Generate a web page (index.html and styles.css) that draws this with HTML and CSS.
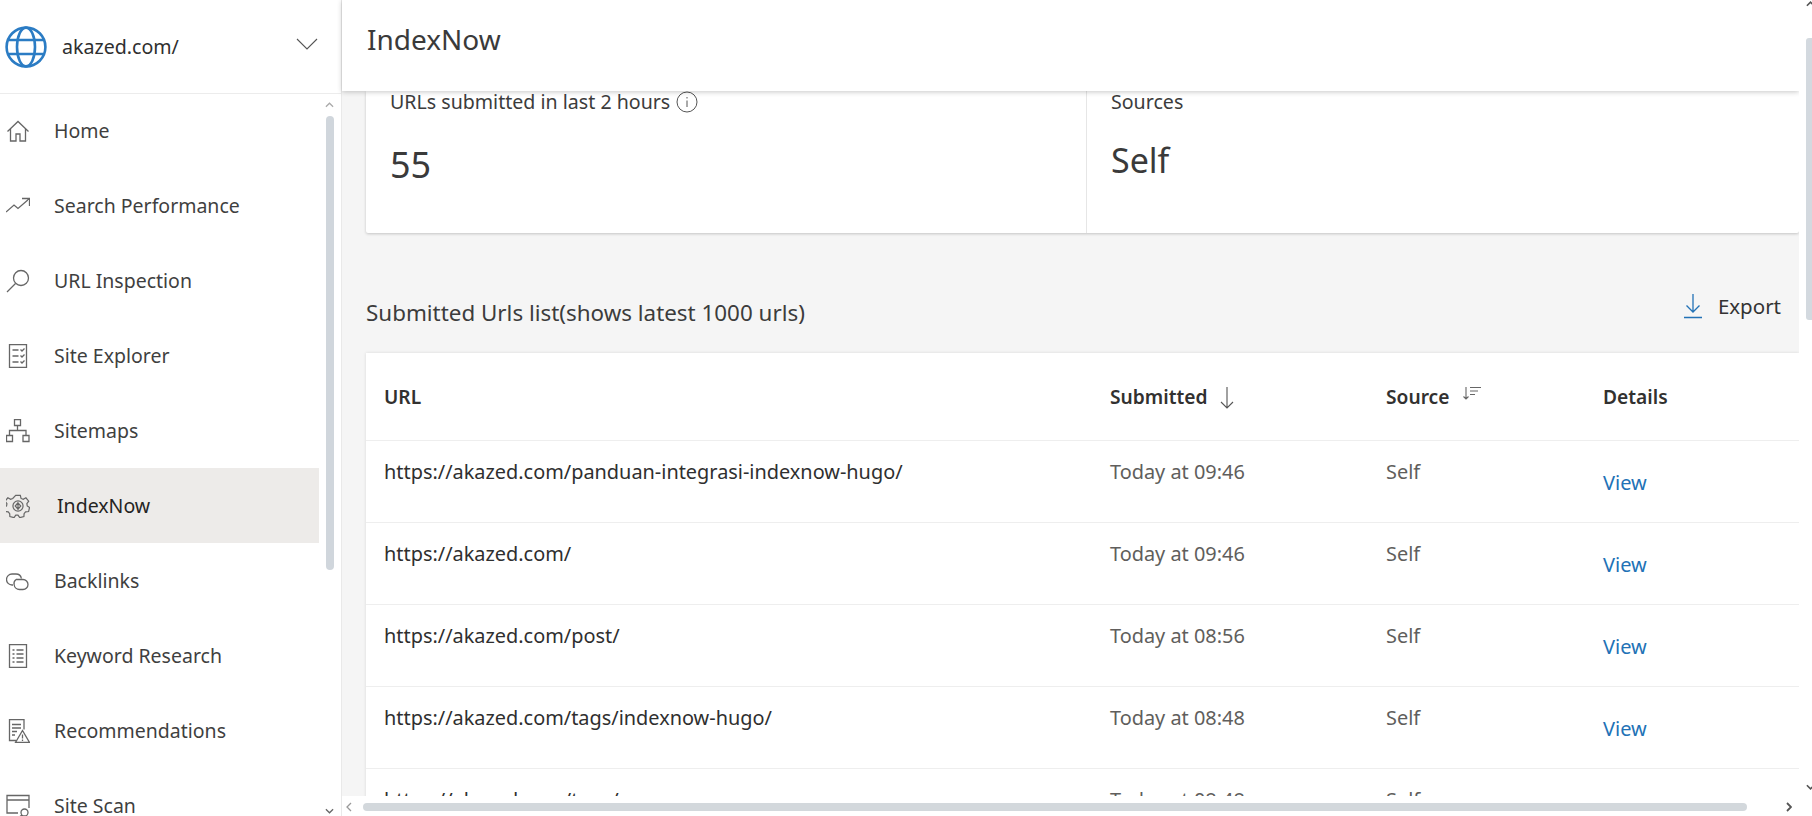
FILE: index.html
```html
<!DOCTYPE html>
<html lang="en">
<head>
<meta charset="utf-8">
<title>IndexNow</title>
<link rel="stylesheet" href="styles.css">
</head>
<body>
<div class="app">
  <aside class="sidebar">
    <div class="site">
      <svg class="globe" viewBox="0 0 42 42" fill="none" stroke="#2b7cc4" stroke-width="2.6"><circle cx="21" cy="21" r="19.4"/><ellipse cx="21" cy="21" rx="9" ry="19.4"/><path d="M4 14h34M4 28h34"/></svg>
      <span class="site-name">akazed.com/</span>
      <svg class="chev" viewBox="0 0 22 12" fill="none" stroke="#555" stroke-width="1.1"><path d="M1 1l10 10L21 1"/></svg>
    </div>
    <nav class="nav">
      <div class="nav-list">
      <a class="nav-item"><span class="ico"><svg viewBox="0 0 24 24"><path d="M1.500 12.500 12 2.500l10.500 10M4.500 10v12h5.500v-7h4v7h5.500V10"/></svg></span>Home</a>
      <a class="nav-item"><span class="ico"><svg viewBox="0 0 24 24"><path d="M0 18l8-7 4 3.500L23 5M16 4.500h7.500V12"/></svg></span>Search Performance</a>
      <a class="nav-item"><span class="ico"><svg viewBox="0 0 24 24"><circle cx="15" cy="9" r="7.500"/><path d="M9.500 14.500 1 23"/></svg></span>URL Inspection</a>
      <a class="nav-item"><span class="ico"><svg viewBox="0 0 24 24"><path d="M3.500 .5h17v23h-17zM6.500 6h6M6.500 12h6M6.500 18h6M14.500 5.500l1.500 1.500 2.500-2.500M14.500 11.500l1.500 1.500 2.500-2.500M14.500 17.500l1.500 1.500 2.500-2.500"/></svg></span>Site Explorer</a>
      <a class="nav-item"><span class="ico"><svg viewBox="0 0 24 24"><path d="M8.500 .5h6v6h-6zM.5 16.500h6v6h-6zM17 16.500h6v6h-6zM11.500 6.500v5M3.500 16.500v-5h16.500v5"/></svg></span>Sitemaps</a>
      <a class="nav-item active"><span class="ico"><svg viewBox="0 0 26 26"><path d="M10.500 1.500h5l.8 3.300 2.300 1 3-1.700 3 3.700-2 2.700.4 2.500 2.500 1.500-1 4.500-3.300.3-1.600 2-.2 3.200-4.500 1.100-1.900-2.700h-2.400l-1.900 2.700-4.500-1.100-.2-3.200-1.600-2-3.300-.3-1-4.500 2.500-1.500.4-2.500-2-2.700 3-3.700 3 1.700 2.300-1z"/><circle cx="13" cy="13" r="5.500"/><path d="M13 9.500l3 3.500-3 3.500-3-3.500zM13 9.500v7"/></svg></span><span class="active-label">IndexNow</span></a>
      <a class="nav-item"><span class="ico"><svg viewBox="0 0 24 24"><path d="M7 16H6A5.500 5.500 0 0 1 6 5h4a5.500 5.500 0 0 1 5.400 4.500"/><path d="M10 10.500h7a5 5 0 0 1 0 10h-3.500a5.500 5.500 0 0 1-5.400-5 5 5 0 0 1 1.900-5"/></svg></span>Backlinks</a>
      <a class="nav-item"><span class="ico"><svg viewBox="0 0 24 24"><path d="M3.500 .5h17v23h-17zM6.500 6h2M10.500 6h7M6.500 10h2M10.500 10h7M6.500 14h2M10.500 14h7M6.500 18h2M10.500 18h7"/></svg></span>Keyword Research</a>
      <a class="nav-item"><span class="ico"><svg viewBox="0 0 24 24"><path d="M10 21.500H3.500V.5h14.500v10M6 5.500h9M6 9h9M6 12.500h5M6 16h3M16.500 11.500l7 12h-14zM16.500 15.500v4M16.500 20.500v1.500"/></svg></span>Recommendations</a>
      <a class="nav-item"><span class="ico"><svg viewBox="0 0 24 24"><path d="M12 19H1V1.500h22V14M1 6h22"/><circle cx="18.500" cy="18.500" r="3.500"/><path d="M16 21l-4 3"/></svg></span>Site Scan</a>
      </div>
      <div class="nav-bar" aria-hidden="true">
        <svg class="arr" viewBox="0 0 10 6"><path d="M1 5l4-4 4 4"/></svg>
        <span class="nav-thumb"></span>
        <span class="nav-fill"></span>
        <svg class="arr" viewBox="0 0 10 6"><path d="M1 1l4 4 4-4"/></svg>
      </div>
    </nav>
  </aside>
  <main class="main">
    <header class="topbar"><h1>IndexNow</h1></header>
    <div class="content">
      <section class="stats">
        <div class="stat stat-first">
          <div class="stat-label">URLs submitted in last 2 hours
            <svg class="info" viewBox="0 0 22 22" fill="none" stroke="#555" stroke-width="1"><circle cx="11" cy="11" r="10"/><path d="M11 9.500V16M11 6v1.500"/></svg>
          </div>
          <div class="stat-num">55</div>
        </div>
        <div class="stat">
          <div class="stat-label">Sources</div>
          <div class="stat-val">Self</div>
        </div>
      </section>
      <div class="list-head">
        <h2>Submitted Urls list(shows latest 1000 urls)</h2>
        <a class="export">
          <svg viewBox="0 0 18 26" fill="none" stroke="#2272b6" stroke-width="1.3"><path d="M9 1v18M2.500 12.500 9 19l6.500-6.500M0 24.500h18"/></svg>
          Export
        </a>
      </div>
      <section class="table">
        <div class="row head">
          <div class="c-url">URL</div>
          <div class="c-sub">Submitted<svg class="sort-big" viewBox="0 0 14 24" fill="none" stroke="#555" stroke-width="1.1"><path d="M7 1v21M1 16l6 6 6-6"/></svg></div>
          <div class="c-src">Source<svg class="sort-small" viewBox="0 0 18 16" fill="none" stroke="#666" stroke-width="1.100"><path d="M3 1v12M.5 10.500 3 13l2.500-2.500M7 1.500h11M7 5h8M7 8.500h5"/></svg></div>
          <div class="c-det">Details</div>
        </div>
        <div class="row">
          <div class="c-url">https://akazed.com/panduan-integrasi-indexnow-hugo/</div>
          <div class="c-sub muted">Today at 09:46</div><div class="c-src muted">Self</div><div class="c-det"><a class="view">View</a></div>
        </div>
        <div class="row">
          <div class="c-url">https://akazed.com/</div>
          <div class="c-sub muted">Today at 09:46</div><div class="c-src muted">Self</div><div class="c-det"><a class="view">View</a></div>
        </div>
        <div class="row">
          <div class="c-url">https://akazed.com/post/</div>
          <div class="c-sub muted">Today at 08:56</div><div class="c-src muted">Self</div><div class="c-det"><a class="view">View</a></div>
        </div>
        <div class="row">
          <div class="c-url">https://akazed.com/tags/indexnow-hugo/</div>
          <div class="c-sub muted">Today at 08:48</div><div class="c-src muted">Self</div><div class="c-det"><a class="view">View</a></div>
        </div>
        <div class="row">
          <div class="c-url">https://akazed.com/tags/</div>
          <div class="c-sub muted">Today at 08:48</div><div class="c-src muted">Self</div><div class="c-det"><a class="view">View</a></div>
        </div>
      </section>
    </div>
    <div class="hbar" aria-hidden="true">
      <svg class="h-arr" viewBox="0 0 6 10"><path d="M5 1 1 5l4 4"/></svg>
      <span class="h-thumb"></span>
      <svg class="h-arr h-arr-end" viewBox="0 0 6 10"><path d="M1 1l4 4-4 4"/></svg>
    </div>
    <div class="vbar" aria-hidden="true">
      <svg class="v-arr" viewBox="0 0 10 6"><path d="M1 5l4-4 4 4"/></svg>
      <span class="v-thumb"></span>
      <svg class="v-arr v-arr-end" viewBox="0 0 10 6"><path d="M1 1l4 4 4-4"/></svg>
    </div>
  </main>
</div>
</body>
</html>
```
FILE: styles.css
```css
* { box-sizing: border-box; }
html, body { margin: 0; height: 100%; overflow: hidden; }
body { font-family: "Noto Sans", "Open Sans", sans-serif; color: #323130; background: #fff; }
.app { display: flex; height: 816px; }

.sidebar { width: 342px; flex: none; display: flex; flex-direction: column; border-right: 1px solid #e9e9e9; background: #fff; }
.site { height: 94px; flex: none; display: flex; align-items: center; padding: 0 10px 0 5px; border-bottom: 1px solid #ececec; }
.globe { width: 42px; height: 42px; flex: none; }
.site-name { margin-left: 15px; font-size: 19.600px; color: #2f2f2f; flex: 1; }
.chev { width: 22px; height: 12px; margin-right: 13px; margin-bottom: 5px; }

.nav { position: relative; flex: 1; overflow: hidden; }
.nav-list { margin-top: -1px; }
.nav-item { display: flex; align-items: center; height: 75px; width: 319px; font-size: 19.500px; color: #3f3f3f; padding-left: 6px; }
.nav-item .ico { width: 48px; flex: none; display: flex; }
.ico svg { width: 24px; height: 24px; fill: none; stroke: #666; stroke-width: 1.300; }
.nav-item.active { background: #edebe9; }
.active-label { margin-left: 3px; color: #252423; }
.nav-bar { position: absolute; top: 0; right: 7px; width: 9px; height: 100%; display: flex; flex-direction: column; align-items: center; }
.nav-bar .arr { width: 9px; height: 6px; margin: 8px 0 8px; fill: none; stroke: #aaa; stroke-width: 1.400; }
.nav-bar .nav-thumb { width: 8px; height: 454px; background: #d0d6dc; border-radius: 4px; flex: none; }
.nav-bar .nav-fill { flex: 1; }
.nav-bar .arr:last-child { stroke: #666; margin-bottom: 2px; }

.main { position: relative; flex: 1; min-width: 0; background: #f5f5f5; display: flex; flex-direction: column; }
.topbar { height: 91px; flex: none; width: 1457px; background: #fff; display: flex; align-items: center; padding: 0 0 14px 25px; box-shadow: 0 1px 5px rgba(0,0,0,.22); position: relative; z-index: 2; }
.topbar h1 { margin: 0; font-size: 28px; font-weight: 400; color: #3a3a3a; }

.content { flex: 1; overflow: hidden; padding-left: 24px; width: 1457px; height: 704px; }
.stats { display: flex; height: 142px; background: #fff; box-shadow: 0 1px 3px rgba(0,0,0,.2); border-radius: 0 0 2px 2px; }
.stat { padding: 0 0 0 24px; height: 100%; }
.stat-first { width: 721px; border-right: 1px solid #e6e6e6; }
.stat-label { font-size: 19.600px; line-height: 20px; display: flex; align-items: center; color: #3c3c3c; height: 20px; margin-top: 1px; }
.info { width: 22px; height: 22px; margin-left: 6px; flex: none; }
.stat-num { font-size: 36px; line-height: 48px; margin-top: 29px; color: #3a3a3a; }
.stat-val { font-size: 34px; line-height: 48px; margin-top: 24px; color: #3a3a3a; }

.list-head { display: flex; justify-content: space-between; align-items: flex-start; height: 120px; padding-top: 64px; }
.list-head h2 { margin: 0; font-size: 22.400px; font-weight: 400; line-height: 32px; color: #3c3c3c; }
.export { display: flex; align-items: center; gap: 16px; font-size: 20.500px; height: 30px; color: #333; margin-right: 18px; margin-top: -6px; }
.export svg { width: 18px; height: 26px; }

.table { background: #fff; box-shadow: 0 0 3px rgba(0,0,0,.12); }
.row { display: grid; grid-template-columns: 726px 276px 217px 1fr; height: 82px; border-bottom: 1px solid #eee; padding: 18px 0 0 18px; font-size: 19.900px; line-height: 26px; color: #2f2f2f; }
.row.head { height: 88px; padding-top: 31px; font-weight: 600; font-size: 19.200px; color: #323130; }
.row > div { white-space: nowrap; }
.muted { color: #605e5c; }
.c-sub, .c-src { display: flex; align-items: flex-start; }
.sort-big { width: 14px; height: 24px; margin-left: 13px; margin-top: 2px; }
.sort-small { width: 18px; height: 16px; margin-left: 14px; margin-top: 2px; }
.view { display: block; color: #2272b6; margin-top: 11px; font-size: 20px; }

.hbar { position: absolute; left: 0; right: 0; bottom: 0; height: 20px; background: #fff; z-index: 3; display: flex; align-items: center; padding-top: 2px; }
.h-arr { width: 6px; height: 10px; fill: none; stroke: #999; stroke-width: 1.300; margin-left: 4px; }
.h-thumb { width: 1384px; height: 8px; background: #d3d8dc; border-radius: 4px; margin-left: 11px; }
.h-arr-end { stroke: #555; margin-left: 39px; stroke-width: 1.800; }
.vbar { position: absolute; top: 0; right: 0; width: 13px; height: 100%; background: #fff; z-index: 4; }
.v-thumb { position: absolute; top: 38px; right: 0; width: 6px; height: 282px; background: #d3d9df; border-radius: 3px 0 0 3px; }
.v-arr { position: absolute; top: 1px; right: -3px; width: 9px; height: 6px; fill: none; stroke: #555; stroke-width: 1.800; }
.v-arr-end { top: 784px; }
```
